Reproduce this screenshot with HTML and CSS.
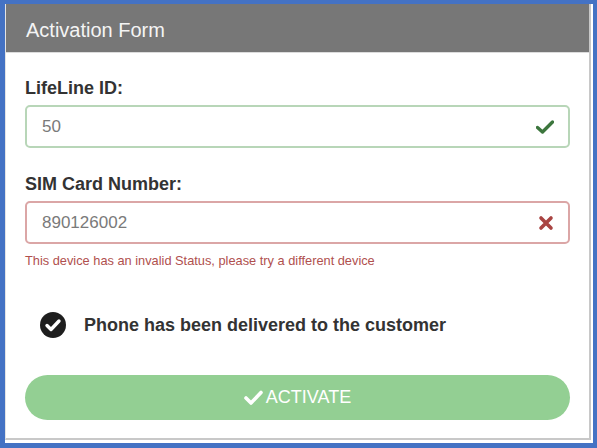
FILE: index.html
```html
<!DOCTYPE html>
<html>
<head>
<meta charset="utf-8">
<link rel="stylesheet" href="styles.css">
</head>
<body>
<div class="frame">
  <div class="panel">
    <div class="panel-head">Activation Form</div>
    <div class="panel-body">
      <div class="field">
        <label class="label">LifeLine ID:</label>
        <div class="input ok">
          <span class="value">50</span>
          <svg class="icon" width="18" height="14" viewBox="0 0 18 14"><path d="M1.5 7.5 L6.5 12 L16.5 2" fill="none" stroke="#3c763d" stroke-width="3.4" stroke-linecap="round" stroke-linejoin="round"/></svg>
        </div>
      </div>
      <div class="field">
        <label class="label">SIM Card Number:</label>
        <div class="input bad">
          <span class="value">890126002</span>
          <svg class="icon" width="16" height="16" viewBox="0 0 16 16"><path d="M3 3 L13 13 M13 3 L3 13" fill="none" stroke="#a94442" stroke-width="3.6" stroke-linecap="round"/></svg>
        </div>
        <div class="error">This device has an invalid Status, please try a different device</div>
      </div>
      <div class="check-row">
        <svg class="circle" width="28" height="28" viewBox="0 0 28 28"><circle cx="14" cy="14" r="13" fill="#1e1e1e"/><path d="M8 14.5 L12 18.5 L20 10" fill="none" stroke="#fff" stroke-width="3.4" stroke-linecap="round" stroke-linejoin="round"/></svg>
        <span class="check-text">Phone has been delivered to the customer</span>
      </div>
      <button class="activate"><svg width="19" height="15" viewBox="0 0 19 15"><path d="M2 8 L7 13 L17 2.5" fill="none" stroke="#fff" stroke-width="3.6" stroke-linecap="round" stroke-linejoin="round"/></svg>ACTIVATE</button>
    </div>
  </div>
</div>
</body>
</html>
```
FILE: styles.css
```css
html, body {
  margin: 0;
  padding: 0;
  background: #fff;
}
body {
  font-family: "Liberation Sans", Arial, sans-serif;
}
.frame {
  width: 597px;
  height: 448px;
  box-sizing: border-box;
  border-style: solid;
  border-color: #4472c4;
  border-width: 4px 4px 5px 5px;
  padding: 0 2px 3px 0;
  background: #fff;
}
.panel {
  height: 100%;
  box-sizing: border-box;
  border-left: 1px solid #e4e4e4;
  border-right: 2px solid #c8c8c8;
  border-bottom: 2px solid #c8c8c8;
  display: flex;
  flex-direction: column;
}
.panel-head {
  height: 49px;
  box-sizing: border-box;
  background: #777777;
  color: #f4f4f4;
  font-size: 20px;
  padding: 4px 20px 0;
  display: flex;
  align-items: center;
  border-bottom: 1px solid #dcdcdc;
}
.panel-body {
  padding: 25px 19px 0 19px;
  display: flex;
  flex-direction: column;
}
.field {
  display: flex;
  flex-direction: column;
}
.field + .field {
  margin-top: 26px;
}
.label {
  font-size: 18px;
  font-weight: bold;
  line-height: 20px;
  color: #333;
  margin-bottom: 7px;
}
.input {
  height: 43px;
  box-sizing: border-box;
  border: 2px solid #b5d5b5;
  border-radius: 5px;
  display: flex;
  align-items: center;
  justify-content: space-between;
  padding: 1px 14px 0 15px;
}
.input.ok { border-color: #b8d6b8; }
.input.bad { border-color: #dba6a6; }
.value {
  font-size: 17px;
  color: #7a7a7a;
}
.error {
  margin-top: 9px;
  font-size: 12.8px;
  line-height: 15px;
  color: #b0504e;
}
.check-row {
  margin-top: 42px;
  height: 30px;
  display: flex;
  align-items: center;
  padding-left: 14px;
}
.circle {
  flex: none;
}
.check-text {
  margin-left: 17px;
  font-size: 18px;
  font-weight: bold;
  color: #333;
}
.activate {
  margin-top: 35px;
  height: 45px;
  border: none;
  border-radius: 23px;
  background: #93cf93;
  color: #fff;
  font-family: "Liberation Sans", Arial, sans-serif;
  font-size: 18px;
  display: flex;
  align-items: center;
  justify-content: center;
  gap: 3px;
  padding: 0;
}
```
